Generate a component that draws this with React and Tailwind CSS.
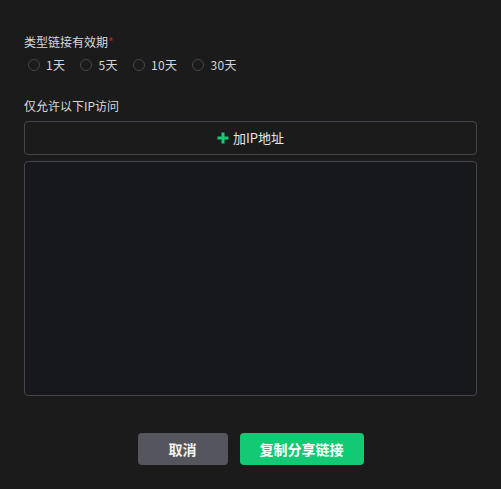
import React from 'react';

const options = ['1天', '5天', '10天', '30天'];

function Radio({ label }) {
  return (
    <label className="flex items-center mr-[15px]">
      <span className="w-3 h-3 rounded-full border border-[#45464c] bg-transparent" />
      <span className="ml-[6px] text-[12px] leading-4 tracking-[0.4px] text-[#d4d4d6]">{label}</span>
    </label>
  );
}

export default function App() {
  return (
    <div
      className="w-[501px] h-[489px] bg-[#1b1b1b] px-6 pt-[34px] flex flex-col"
      style={{ fontFamily: '"Noto Sans CJK SC", "Noto Sans", sans-serif' }}
    >
      <div className="text-[12px] leading-4 text-[#d9d9db]">
        类型链接有效期<span className="text-[#b3261e]">*</span>
      </div>
      <div className="flex items-center mt-[7px] ml-1">
        {options.map((o) => (
          <Radio key={o} label={o} />
        ))}
      </div>

      <div className="mt-[25px] text-[12px] leading-4 text-[#d9d9db]">仅允许以下IP访问</div>
      <button className="mt-[7px] h-[34px] w-full rounded border border-[#45464d] bg-[#1b1b1c] flex items-center justify-center">
        <svg width="12" height="12" viewBox="0 0 12 12" className="mr-1">
          <path d="M6 0.5v11M0.5 6h11" stroke="#14c974" strokeWidth="3" />
        </svg>
        <span className="text-[13px] text-[#e6e6e8]">加IP地址</span>
      </button>
      <textarea className="mt-[6px] h-[235px] w-full rounded border border-[#45464d] bg-[#17181b] resize-none outline-none" />

      <div className="mt-[37px] flex justify-center gap-3">
        <button className="w-[90px] h-8 rounded bg-[#55565d] text-[14px] font-bold text-[#f2f2f2]">取消</button>
        <button className="w-[124px] h-8 rounded bg-[#13c973] text-[14px] font-bold text-white">复制分享链接</button>
      </div>
    </div>
  );
}
